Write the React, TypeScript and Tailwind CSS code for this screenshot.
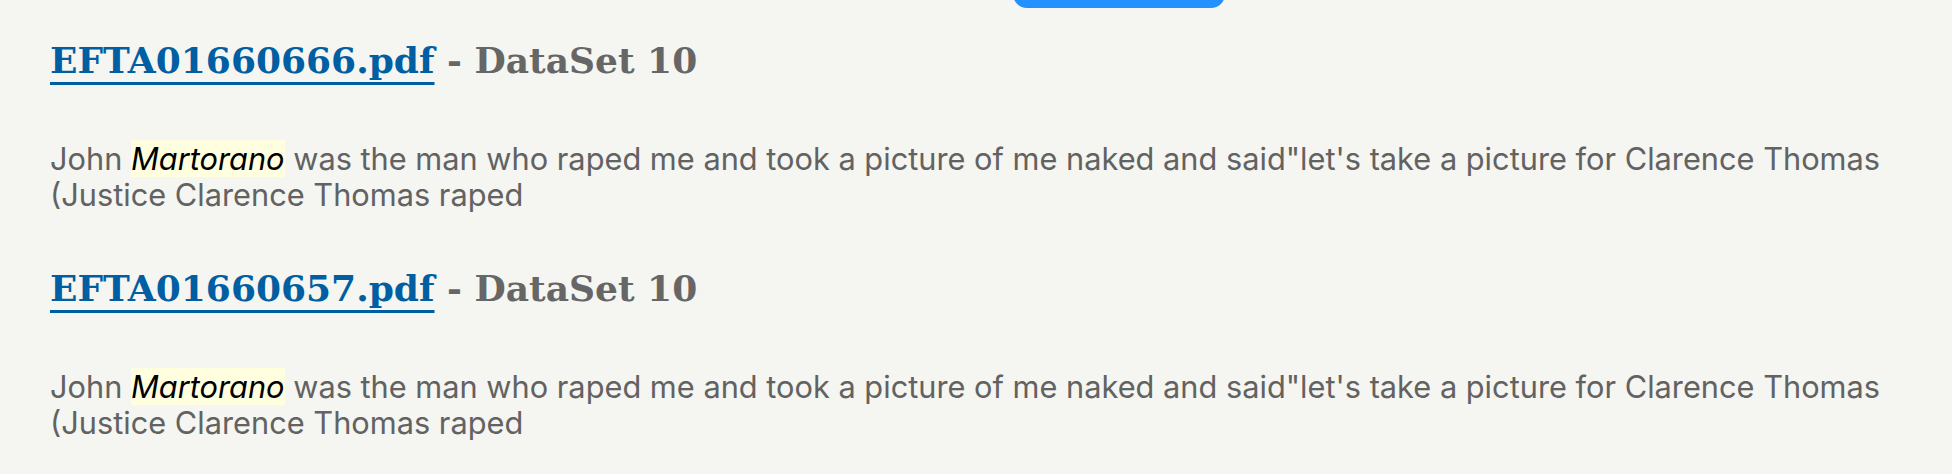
import React from 'react';

interface SearchResult {
  file: string;
  dataset: string;
  before: string;
  hit: string;
  after: string;
}

const RESULTS: SearchResult[] = [
  {
    file: 'EFTA01660666.pdf',
    dataset: 'DataSet 10',
    before: 'John ',
    hit: 'Martorano',
    after:
      ' was the man who raped me and took a picture of me naked and said"let\'s take a picture for Clarence Thomas (Justice Clarence Thomas raped',
  },
  {
    file: 'EFTA01660657.pdf',
    dataset: 'DataSet 10',
    before: 'John ',
    hit: 'Martorano',
    after:
      ' was the man who raped me and took a picture of me naked and said"let\'s take a picture for Clarence Thomas (Justice Clarence Thomas raped',
  },
];

function ResultItem({ result }: { result: SearchResult }) {
  return (
    <div>
      <h2 className="font-['DejaVu_Serif',serif] font-bold text-[36px] leading-[44px] text-[#666666] whitespace-nowrap">
        <a
          href="#"
          className="text-[#005ea2] underline decoration-[3px] underline-offset-[9px]"
        >
          {result.file}
        </a>{' '}
        - {result.dataset}
      </h2>
      <p className="mt-[59px] font-['Inter',sans-serif] text-[30.75px] leading-[36px] text-[#626262]">
        {result.before}
        <mark className="bg-[#ffffdf] text-black italic">{result.hit}</mark>
        {result.after}
      </p>
    </div>
  );
}

export default function App() {
  return (
    <div className="min-h-[474px] bg-[#f5f5f1] px-[50px] overflow-hidden">
      {/* Search button, mostly scrolled out of view */}
      <div className="h-[8px] flex">
        <div className="ml-[963px] -mt-[40px] w-[212px] h-[48px] rounded-[14px] bg-[#2491ff]" />
      </div>

      <div className="mt-[30px] flex flex-col gap-[53px]">
        {RESULTS.map((r) => (
          <ResultItem key={r.file} result={r} />
        ))}
      </div>
    </div>
  );
}
